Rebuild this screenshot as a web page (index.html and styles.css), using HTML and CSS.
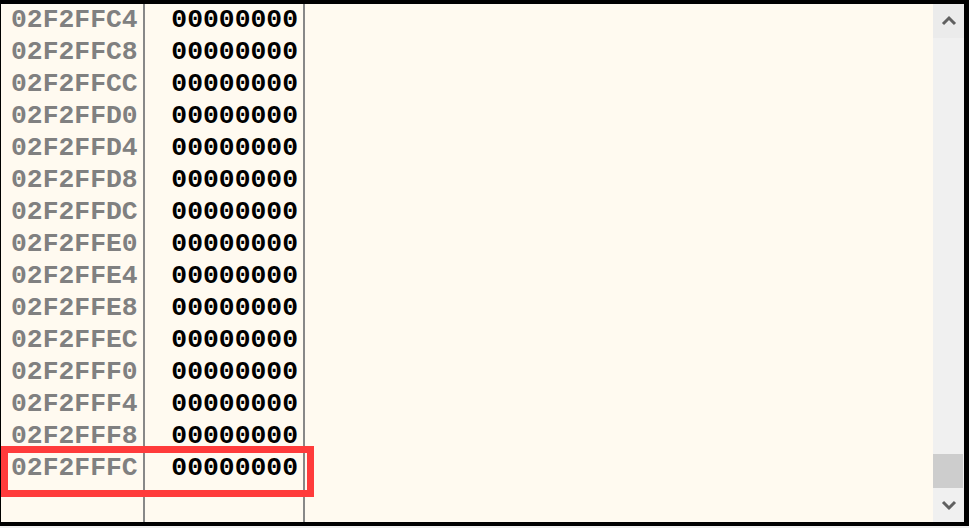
FILE: index.html
```html
<!DOCTYPE html>
<html>
<head>
<meta charset="utf-8">
<link rel="stylesheet" href="styles.css">
</head>
<body>
<div class="frame">
  <div class="view">
    <div class="col addr">
      <div class="row">02F2FFC4</div>
      <div class="row">02F2FFC8</div>
      <div class="row">02F2FFCC</div>
      <div class="row">02F2FFD0</div>
      <div class="row">02F2FFD4</div>
      <div class="row">02F2FFD8</div>
      <div class="row">02F2FFDC</div>
      <div class="row">02F2FFE0</div>
      <div class="row">02F2FFE4</div>
      <div class="row">02F2FFE8</div>
      <div class="row">02F2FFEC</div>
      <div class="row">02F2FFF0</div>
      <div class="row">02F2FFF4</div>
      <div class="row">02F2FFF8</div>
      <div class="row">02F2FFFC</div>
    </div>
    <div class="col val">
      <div class="row">00000000</div>
      <div class="row">00000000</div>
      <div class="row">00000000</div>
      <div class="row">00000000</div>
      <div class="row">00000000</div>
      <div class="row">00000000</div>
      <div class="row">00000000</div>
      <div class="row">00000000</div>
      <div class="row">00000000</div>
      <div class="row">00000000</div>
      <div class="row">00000000</div>
      <div class="row">00000000</div>
      <div class="row">00000000</div>
      <div class="row">00000000</div>
      <div class="row">00000000</div>
    </div>
    <div class="col comment"></div>
    <div class="scrollbar">
      <div class="sb-btn">
        <svg width="16" height="12" viewBox="0 0 16 12"><path d="M2 9 L8 3 L14 9" fill="none" stroke="#606060" stroke-width="3"/></svg>
      </div>
      <div class="sb-track">
        <div class="sb-thumb"></div>
      </div>
      <div class="sb-btn">
        <svg width="16" height="12" viewBox="0 0 16 12"><path d="M2 3 L8 9 L14 3" fill="none" stroke="#606060" stroke-width="3"/></svg>
      </div>
    </div>
    <div class="highlight"></div>
  </div>
</div>
</body>
</html>
```
FILE: styles.css
```css
html, body {
  margin: 0;
  padding: 0;
}
body {
  background: #f0f0f0;
  width: 969px;
  height: 528px;
  overflow: hidden;
}
.frame {
  box-sizing: border-box;
  width: 969px;
  height: 526px;
  border-style: solid;
  border-color: #000;
  border-width: 4px 5px 4px 1px;
  background: #fffaf0;
}
.view {
  position: relative;
  display: flex;
  height: 518px;
}
.col {
  font-family: "Liberation Mono", monospace;
  font-weight: bold;
  font-size: 26.4px;
  line-height: 32px;
}
.addr {
  width: 144px;
  border-right: 2px solid #888;
  color: #808080;
  padding-left: 10px;
  box-sizing: border-box;
}
.val {
  width: 160px;
  border-right: 2px solid #888;
  color: #000;
  text-align: right;
  padding-right: 5px;
  box-sizing: border-box;
}
.comment {
  flex: 1;
}
.row {
  height: 32px;
  white-space: nowrap;
}
.scrollbar {
  width: 31px;
  display: flex;
  flex-direction: column;
  background: #f0f0f0;
}
.sb-btn {
  height: 34px;
  display: flex;
  align-items: center;
  justify-content: center;
  background: #ebebeb;
}
.sb-btn:last-child {
  background: #f0f0f0;
}
.sb-track {
  flex: 1;
  display: flex;
  flex-direction: column;
  justify-content: flex-end;
}
.sb-thumb {
  height: 34px;
  margin: 0 1px 0 0;
  background: #cdcdcd;
}
.highlight {
  position: absolute;
  left: 0;
  top: 442px;
  width: 313px;
  height: 51px;
  box-sizing: border-box;
  border: 7px solid #ff3b3b;
}
```
